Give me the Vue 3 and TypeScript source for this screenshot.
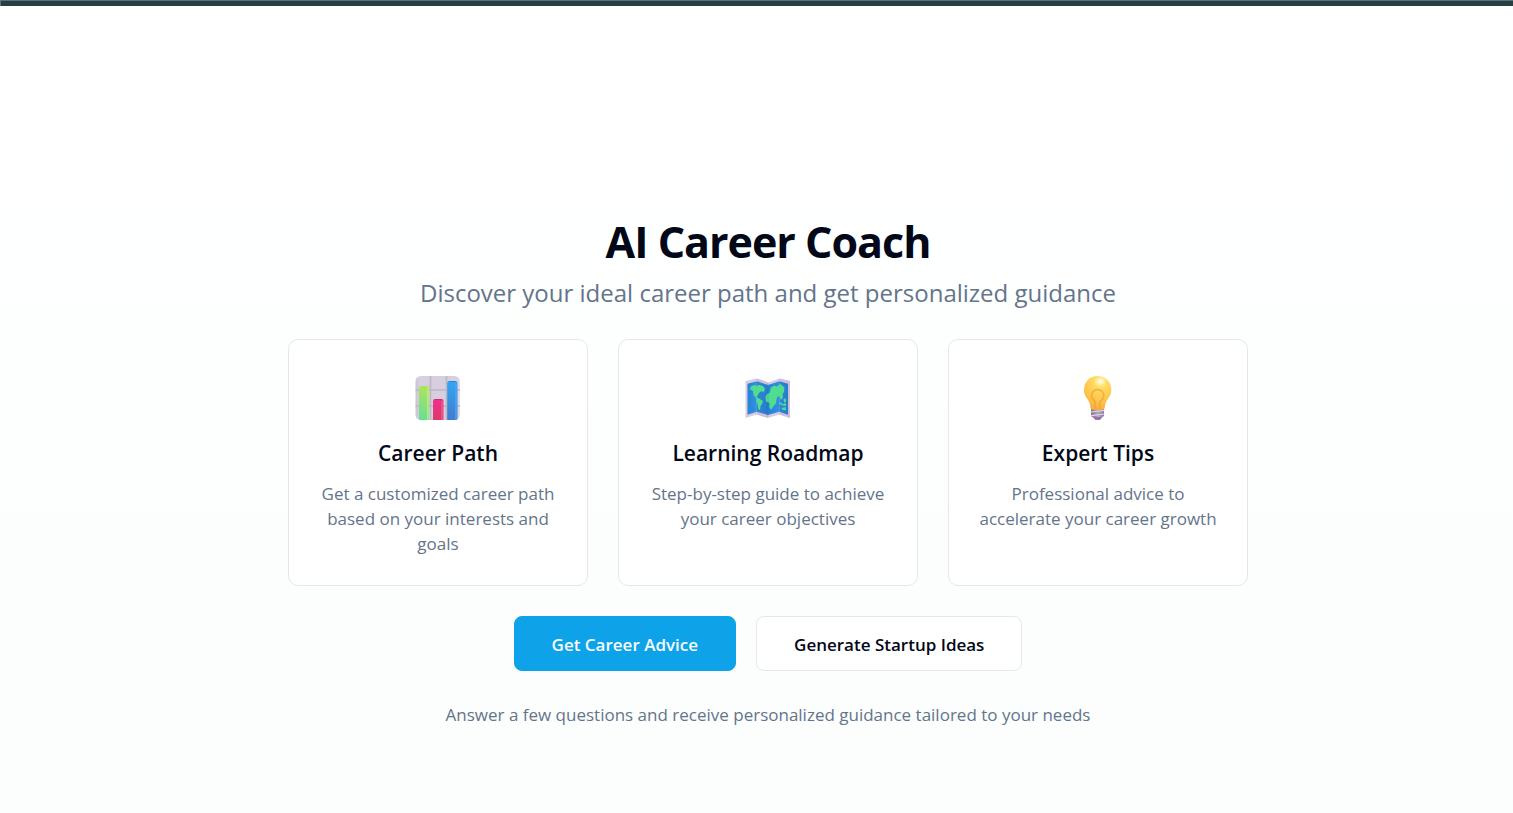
<script setup lang="ts">
interface Feature {
  icon: 'chart' | 'map' | 'bulb'
  title: string
  text: string
}

const features: Feature[] = [
  { icon: 'chart', title: 'Career Path', text: 'Get a customized career path based on your interests and goals' },
  { icon: 'map', title: 'Learning Roadmap', text: 'Step-by-step guide to achieve your career objectives' },
  { icon: 'bulb', title: 'Expert Tips', text: 'Professional advice to accelerate your career growth' },
]
</script>

<template>
  <div class="page">
    <div class="topbar"></div>
    <main class="hero">
      <h1>AI Career Coach</h1>
      <p class="subtitle">Discover your ideal career path and get personalized guidance</p>

      <section class="cards">
        <article v-for="f in features" :key="f.title" class="card">
          <svg v-if="f.icon === 'chart'" class="icon" viewBox="0 0 46 46" aria-hidden="true">
            <defs>
              <linearGradient id="green" x1="0" y1="0" x2="0" y2="1">
                <stop offset="0" stop-color="#b0e35a" /><stop offset="1" stop-color="#62df9b" />
              </linearGradient>
              <linearGradient id="pink" x1="0" y1="0" x2="0" y2="1">
                <stop offset="0" stop-color="#ef3090" /><stop offset="1" stop-color="#dc3b64" />
              </linearGradient>
              <linearGradient id="blue" x1="0" y1="0" x2="0" y2="1">
                <stop offset="0" stop-color="#32a5f5" /><stop offset="1" stop-color="#437bcc" />
              </linearGradient>
              <linearGradient id="panel" x1="0" y1="0" x2="1" y2="0">
                <stop offset="0" stop-color="#c9c2d0" /><stop offset="0.1" stop-color="#d6cfdf" />
                <stop offset="0.9" stop-color="#d6cfdf" /><stop offset="1" stop-color="#e5deec" />
              </linearGradient>
              <clipPath id="panel-clip"><rect x="0.5" y="1" width="44.5" height="44" rx="5.5" /></clipPath>
            </defs>
            <g clip-path="url(#panel-clip)">
              <rect width="46" height="46" fill="url(#panel)" />
              <path d="M15.500 0V46M31.500 0V46M0 15H46M0 31H46" stroke="#bdb7c4" stroke-width="1.600" />
              <path d="M4 46V13q0-2 2-2h6q2 0 2 2v33z" fill="url(#green)" />
              <path d="M12.800 12.500v33" stroke="#c5f36c" stroke-opacity=".8" stroke-width="1.500" />
              <path d="M18 46V26q0-2 2-2h6.500q2 0 2 2v20z" fill="url(#pink)" />
              <path d="M27 26v19" stroke="#f3598c" stroke-width="1.500" />
              <path d="M19.500 24.500h7.500" stroke="#bd2465" stroke-opacity=".6" stroke-width="1" />
              <path d="M32.200 46V8q0-2 2-2H40.500q2 0 2 2v38z" fill="url(#blue)" />
              <path d="M41 8v37" stroke="#4aa8ef" stroke-width="1.500" />
              <path d="M33.700 6.500h7.300" stroke="#2472b9" stroke-opacity=".6" stroke-width="1" />
            </g>
          </svg>

          <svg v-else-if="f.icon === 'map'" class="icon" viewBox="0 0 46 46" aria-hidden="true">
            <defs>
              <linearGradient id="fold-a" x1="0" y1="0" x2="1" y2="0">
                <stop offset="0" stop-color="#2484d7" /><stop offset="1" stop-color="#3390e2" />
              </linearGradient>
              <linearGradient id="fold-b" x1="0" y1="0" x2="1" y2="0">
                <stop offset="0" stop-color="#2b86d8" /><stop offset="1" stop-color="#277ccc" />
              </linearGradient>
            </defs>
            <path d="M0.500 6 11.800 3.500 23 7.500 34.300 3.500 45 6V43L34.300 39.500 23 43 11.800 39.500 0.500 43z" fill="#d9cce2" />
            <path d="M11.800 3.500 23 7.500V43L11.800 39.500zM34.300 3.500 45 6V43L34.300 39.500z" fill="#cdbed9" />
            <path d="M2.500 8.700 11.800 6.300V36.700L2.500 39.700z" fill="url(#fold-a)" />
            <path d="M11.800 6.300 23 10V40L11.800 36.700z" fill="url(#fold-b)" />
            <path d="M23 10 34.300 6.300V36.700L23 40z" fill="url(#fold-a)" />
            <path d="M34.300 6.300 43 8.700V39.700L34.300 36.700z" fill="url(#fold-b)" />
            <g fill="#50dc91">
              <path d="M4.500 15.500 6 11.500 9 10 12 11 14 9.700 18 11 20 14 18.500 17.500 16.500 16 14 18 12.500 20.500 11.500 22 14 23.500 18 26 17 29 15.500 31 15 35.500 13.300 34 12.500 29 11 26 11.500 23.500 8.500 20 8 16 6 14.500z" />
              <path d="M20.500 22 22 19 25 17.500 25.500 13 29 10.500 32 11.500 35.500 9 39.500 12.500 39 17 37.500 19 38 22 36 25 34.500 22 33 21 31.500 24 31 28.500 28.500 31 26.500 34.500 24.500 33 24.500 28 21 26.500z" />
              <path d="M34.500 27 37.500 28.500 37 30 34.500 29zM38.500 23.500h2l.5 3.500-2 .5zM37 29.500l4-1.500v3l-4-.5zM36.500 33l4-1 .5 3.500-4-1z" />
            </g>
            <path d="M23 8V42" stroke="#39486f" stroke-opacity=".2" />
          </svg>

          <svg v-else class="icon" viewBox="0 0 46 46" aria-hidden="true">
            <defs>
              <radialGradient id="glass" cx="0.62" cy="0.15" r="0.9">
                <stop offset="0" stop-color="#fff0a0" /><stop offset="0.25" stop-color="#ffdc62" />
                <stop offset="0.65" stop-color="#ffc64b" /><stop offset="1" stop-color="#f4ac39" />
              </radialGradient>
              <radialGradient id="shine">
                <stop offset="0" stop-color="#fff" /><stop offset="1" stop-color="#fff3b0" stop-opacity="0" />
              </radialGradient>
              <linearGradient id="base" x1="0" y1="0" x2="1" y2="0">
                <stop offset="0" stop-color="#84718c" /><stop offset="0.55" stop-color="#b9a7c3" /><stop offset="1" stop-color="#8b77a1" />
              </linearGradient>
            </defs>
            <path d="M16 33h13v8l-2 1.500-2 2.300h-4.500L18 42.500l-2-1.500z" fill="url(#base)" />
            <path d="M15.500 37 29.500 35.300M16 40.700 29.500 39" stroke="#e2d4e8" stroke-width="1.200" />
            <path d="M18.500 42.300h8.500l-2 2.500h-4.500z" fill="#9069b4" />
            <path d="M22.700 1C14.800 1 9 7 9 14.800c0 5.200 2.700 7.700 4.700 11.200 1.300 2.300 1.500 4.400 1.800 6.500.2 1.500 1 2.200 2.500 2.200h9.300c1.500 0 2.300-.7 2.500-2.200.3-2.100.5-4.200 1.800-6.500 2-3.500 4.700-6 4.700-11.200C36.300 7 30.600 1 22.700 1z" fill="url(#glass)" />
            <path d="M20.300 33.500V26.500c-2.200-1.500-3.700-3.400-3.700-5.800a6.100 6.100 0 0 1 12.200 0c0 2.400-1.500 4.300-3.700 5.800v7" fill="none" stroke="#f2a13d" stroke-opacity=".8" stroke-width="1.500" />
            <ellipse cx="25" cy="6.500" rx="6.500" ry="5" fill="url(#shine)" />
          </svg>

          <h2>{{ f.title }}</h2>
          <p>{{ f.text }}</p>
        </article>
      </section>

      <div class="actions">
        <button type="button" class="btn primary">Get Career Advice</button>
        <button type="button" class="btn">Generate Startup Ideas</button>
      </div>

      <p class="note">Answer a few questions and receive personalized guidance tailored to your needs</p>
    </main>
  </div>
</template>

<style>
body {
  margin: 0;
}
</style>

<style scoped>
.page {
  box-sizing: border-box;
  min-height: 100vh;
  background: linear-gradient(#fff, #fbfefd);
  color: #020817;
  font-family: "Segoe UI", "Open Sans", "Noto Sans", sans-serif;
}

.topbar {
  box-sizing: border-box;
  height: 6px;
  background: #263f44;
  border-top: 1px solid #5b7277;
  border-left: 1px solid #5b7277;
}

.hero {
  display: flex;
  flex-direction: column;
  align-items: center;
  padding: 211px 0 40px 23px;
  text-align: center;
}

h1,
h2,
p {
  margin: 0;
}

h1 {
  font-size: 43px;
  line-height: 50px;
  font-weight: 700;
  letter-spacing: -1px;
}

.subtitle {
  margin-top: 8px;
  font-size: 24px;
  line-height: 35px;
  color: #64748b;
}

.cards {
  display: grid;
  grid-template-columns: repeat(3, 1fr);
  gap: 30px;
  width: 100%;
  max-width: 960px;
  margin-top: 29px;
}

.card {
  box-sizing: border-box;
  display: flex;
  flex-direction: column;
  align-items: center;
  padding: 35px 30px 29px;
  background: #fff;
  border: 1px solid #e2e8f0;
  border-radius: 10px;
}

.icon {
  display: block;
  width: 46px;
  height: 46px;
}

h2 {
  margin-top: 15px;
  font-size: 21px;
  line-height: 35px;
  font-weight: 600;
}

.card p {
  margin-top: 10px;
  font-size: 17px;
  line-height: 25px;
  color: #64748b;
}

.actions {
  display: flex;
  gap: 20px;
  margin-top: 30px;
}

.btn {
  box-sizing: border-box;
  height: 55px;
  padding: 2px 37px 0;
  background: #fff;
  color: #020817;
  border: 1px solid #e2e8f0;
  border-radius: 8px;
  font-family: inherit;
  font-size: 17px;
  font-weight: 600;
  cursor: pointer;
}

.primary {
  background: #0ea2e9;
  border-color: #0ea2e9;
  color: #f8fafc;
}

.note {
  margin-top: 30px;
  font-size: 17px;
  line-height: 27px;
  color: #64748b;
}
</style>
